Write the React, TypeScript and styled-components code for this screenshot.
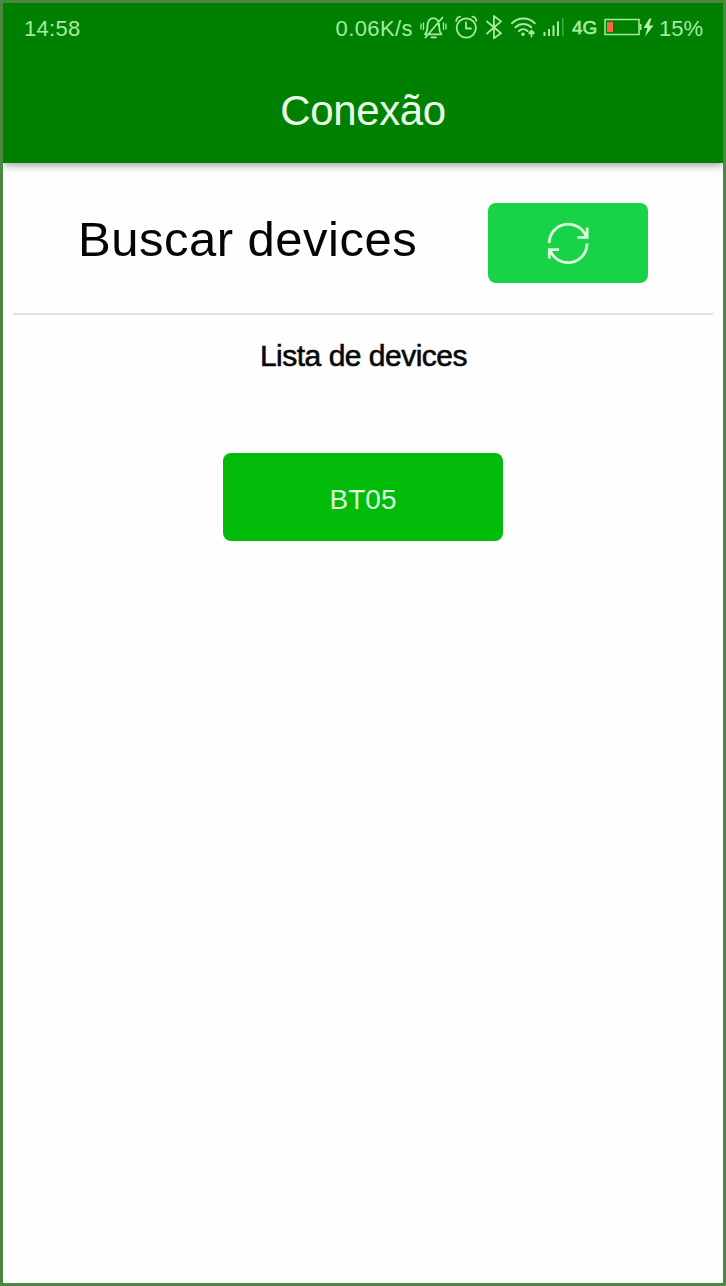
import React from 'react';
import styled, { createGlobalStyle } from 'styled-components';

const GlobalStyle = createGlobalStyle`
  *, *::before, *::after { box-sizing: border-box; }
  body { margin: 0; font-family: 'Liberation Sans', Arial, sans-serif; }
`;

const Screen = styled.main`
  width: 726px;
  height: 1286px;
  border: 3px solid #4b8740;
  background: #fefefe;
  display: flex;
  flex-direction: column;
  overflow: hidden;
`;

const Header = styled.header`
  height: 160px;
  flex: none;
  background: #008000;
  box-shadow: 0 2px 8px rgba(0, 0, 0, 0.4);
`;

const StatusBar = styled.div`
  height: 50px;
  padding: 0 20px 0 21px;
  display: flex;
  align-items: center;
  color: #a6eba0;
`;

const StatusText = styled.span<{ $spacing?: number }>`
  height: 50px;
  font-size: 22px;
  line-height: 52px;
  letter-spacing: ${({ $spacing = 0 }) => $spacing}px;
  white-space: nowrap;
`;

const StatusGroup = styled.div`
  margin-left: auto;
  display: flex;
  align-items: center;
`;

const StatusIcons = styled.svg`
  display: block;
  margin-left: 6px;
`;

const Network = styled.span`
  width: 28px;
  margin-left: 7px;
  font-size: 19px;
  line-height: 48px;
  -webkit-text-stroke: 0.6px currentColor;
`;

const Battery = styled.svg`
  display: block;
  margin: 0 5px 0 4px;
`;

const Title = styled.h1`
  margin: 0;
  padding-top: 25px;
  font-size: 42px;
  line-height: 66px;
  font-weight: 400;
  letter-spacing: -0.4px;
  text-align: center;
  color: #e9ffe6;
`;

const SearchRow = styled.section`
  height: 152px;
  margin: 0 10px;
  padding: 40px 65px 0 65px;
  display: flex;
  justify-content: space-between;
  align-items: flex-start;
  border-bottom: 2px solid #dfdfdf;
`;

const SearchLabel = styled.span`
  font-size: 49px;
  line-height: 72px;
  letter-spacing: 0.5px;
  white-space: nowrap;
  color: #050505;
`;

const Button = styled.button<{ $width: number; $height: number; $color: string }>`
  width: ${({ $width }) => $width}px;
  height: ${({ $height }) => $height}px;
  padding: 0;
  border: 0;
  border-radius: 8px;
  background: ${({ $color }) => $color};
  color: #dcffdc;
  display: flex;
  align-items: center;
  justify-content: center;
  font: 400 28px/34px 'Liberation Sans', Arial, sans-serif;
`;

const DeviceName = styled.span`
  padding-top: 5px;
`;

const Devices = styled.section`
  display: flex;
  flex-direction: column;
  align-items: center;
  padding-top: 21px;
  gap: 77px;
`;

const ListTitle = styled.h2`
  margin: 0;
  padding-left: 1px;
  font-size: 30px;
  line-height: 40px;
  height: 40px;
  font-weight: 400;
  letter-spacing: -0.5px;
  color: #080808;
  -webkit-text-stroke: 0.6px currentColor;
`;

const DeviceList = styled.div`
  display: flex;
  flex-direction: column;
`;

function SystemIcons() {
  return (
    <StatusIcons width="146" height="30" viewBox="419 13 146 30" fill="none" stroke="currentColor" strokeWidth="1.8" strokeLinecap="round" strokeLinejoin="round">
      {/* muted bell */}
      <path d="M425 34.3h16.500c-1.700-1.800-2.200-3.300-2.200-5.800 0-6.500-1.300-10.300-6-10.300s-6 3.800-6 10.300c0 2.500-.6 4-2.300 5.800M431.500 37.300h4.500M425.500 37.500 442.500 17.500" />
      <path strokeWidth="1.3" d="M421 24v5M423.500 23v6.500M443.500 23v6.500M446 24v5" />
      {/* alarm */}
      <circle cx="466.300" cy="28" r="9.600" />
      <path d="M466 22.500v6h5M456.200 20.800c.4-2.400 1.700-3.800 4-4.100M476.400 20.800c-.4-2.400-1.700-3.800-4-4.100" />
      {/* bluetooth */}
      <path d="M487 21.500 501 33.300l-7.100 5V16l7.100 5.400L487 33.500" />
      {/* wifi */}
      <path strokeWidth="2" d="M512 23.200c6.500-6.200 16.500-6.200 22.800 0M515.500 27.300c4.600-4.300 11.400-4.300 15.800 0M519 31c2.500-2.300 6-2.300 8.600 0" />
      <circle cx="523" cy="34.300" r="1.800" fill="currentColor" stroke="none" />
      <path strokeWidth="1.700" d="M531.500 30.500v6M529.300 32.700l2.200-2.200 2.200 2.200M529.300 33.500h4.400" />
      {/* signal */}
      <path strokeWidth="2" strokeLinecap="butt" d="M544.500 32v4M549 29v7M553.500 25.500v10.500M558 21.500V36" />
      <path strokeWidth="1.500" strokeLinecap="butt" opacity=".4" d="M562.800 18v18" />
    </StatusIcons>
  );
}

function BatteryIcon() {
  return (
    <Battery width="50" height="24" viewBox="604 16 50 24" fill="none">
      <rect x="605" y="19.500" width="34" height="15" stroke="currentColor" strokeWidth="1.500" />
      <path d="M640.500 24v6" stroke="currentColor" strokeWidth="2" />
      <rect x="607" y="22" width="6" height="10" fill="#fa6840" />
      <path d="m649.500 18.500-6 9.500h4l-2.500 8.500 8.500-11h-4.500l2.500-7z" fill="#b9f3b1" />
    </Battery>
  );
}

function RefreshIcon() {
  return (
    <svg width="44" height="44" viewBox="546 221 44 44" fill="none" stroke="currentColor" strokeWidth="2.800">
      <path d="M549.200 243a19 19 0 0 1 37-6M587 243.500a19 19 0 0 1-37 6.300" />
      <path d="M587.200 227.500v9.800h-9.700M549.300 258.500v-8.800h9.700" />
    </svg>
  );
}

export default function App() {
  return (
    <>
      <GlobalStyle />
      <Screen>
        <Header>
          <StatusBar>
            <StatusText $spacing={0.3}>14:58</StatusText>
            <StatusGroup>
              <StatusText $spacing={0.4}>0.06K/s</StatusText>
              <SystemIcons />
              <Network>4G</Network>
              <BatteryIcon />
              <StatusText>15%</StatusText>
            </StatusGroup>
          </StatusBar>
          <Title>Conexão</Title>
        </Header>
        <SearchRow>
          <SearchLabel>Buscar devices</SearchLabel>
          <Button $width={160} $height={80} $color="#18d348" aria-label="Buscar devices">
            <RefreshIcon />
          </Button>
        </SearchRow>
        <Devices>
          <ListTitle>Lista de devices</ListTitle>
          <DeviceList>
            <Button $width={280} $height={88} $color="#02bb0a">
              <DeviceName>BT05</DeviceName>
            </Button>
          </DeviceList>
        </Devices>
      </Screen>
    </>
  );
}
